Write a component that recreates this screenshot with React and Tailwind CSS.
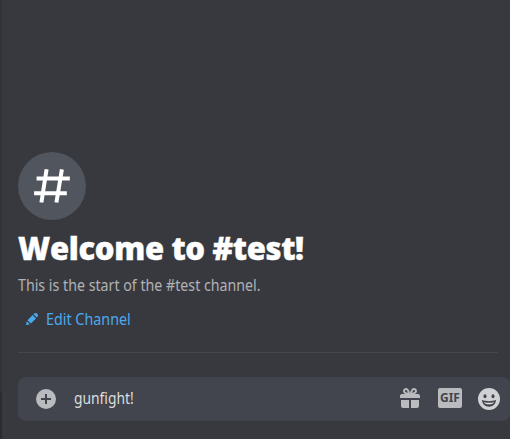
function HashIcon() {
  return (
    <svg width="68" height="68" viewBox="0 0 68 68" fill="none" stroke="#fff" strokeWidth="4">
      <path d="M28.6 17.3 23.4 50.5M43.9 17.3 38.4 50.5M18.6 26.6H51.8M16.1 41.3H48.8" />
    </svg>
  );
}

function PencilIcon() {
  return (
    <svg width="16" height="16" viewBox="0 0 24 24" fill="currentColor">
      <path fillRule="evenodd" clipRule="evenodd" d="M19.2929 9.8299L19.9409 9.18278C21.353 7.77064 21.353 5.47197 19.9409 4.05892C18.5287 2.64678 16.2292 2.64678 14.817 4.05892L14.1699 4.70694L19.2929 9.8299ZM12.8962 5.97688L5.18469 13.6906L10.3085 18.813L18.0201 11.0992L12.8962 5.97688ZM4.11851 20.9704L8.75906 19.8112L4.18692 15.239L3.02678 19.8796C2.95028 20.1856 3.04028 20.5105 3.26349 20.7337C3.48669 20.9569 3.8116 21.046 4.11851 20.9704Z" />
    </svg>
  );
}

function PlusIcon() {
  return (
    <svg width="20" height="20" viewBox="0 0 20 20">
      <circle cx="10" cy="10" r="10" fill="#b9bbbe" />
      <path d="M10 5v10M5 10h10" stroke="#42454d" strokeWidth="2" />
    </svg>
  );
}

function GiftIcon() {
  return (
    <svg className="-mt-0.5" width="24" height="24" viewBox="0 0 24 24" fill="#b9bbbe">
      <path fillRule="evenodd" clipRule="evenodd" d="M16.886 7.999H20C21.104 7.999 22 8.896 22 9.999V11.999H2V9.999C2 8.896 2.897 7.999 4 7.999H7.114C6.663 7.764 6.236 7.477 5.879 7.121C4.709 5.951 4.709 4.048 5.879 2.879C7.012 1.746 8.986 1.746 10.121 2.877C11.758 4.514 11.979 7.595 11.998 7.941L11.9875 7.999H12.0125L12.0002 7.94C12.022 7.595 12.242 4.515 13.879 2.878C15.014 1.745 16.986 1.746 18.121 2.877C19.29 4.049 19.29 5.952 18.121 7.121C17.764 7.477 17.337 7.764 16.886 7.999ZM7.293 5.707C6.903 5.316 6.903 4.682 7.293 4.292C7.481 4.103 7.732 4 8 4C8.268 4 8.519 4.103 8.707 4.292C9.297 4.882 9.641 5.94 9.825 6.822C8.945 6.639 7.879 6.293 7.293 5.707ZM14.174 6.824C14.359 5.941 14.702 4.883 15.293 4.293C15.481 4.103 15.732 4 16 4C16.268 4 16.519 4.103 16.706 4.291C17.096 4.682 17.097 5.316 16.707 5.707C16.116 6.298 15.057 6.642 14.174 6.824ZM3 13.999V19.999C3 21.102 3.897 21.999 5 21.999H11V13.999H3ZM13 13.999V21.999H19C20.104 21.999 21 21.102 21 19.999V13.999H13Z" />
    </svg>
  );
}

function SmileIcon() {
  return (
    <svg width="22" height="22" viewBox="0 0 22 22">
      <circle cx="11" cy="11" r="11" fill="#d0d1d2" />
      <ellipse cx="7" cy="8.2" rx="1.5" ry="2" fill="#42454d" />
      <ellipse cx="15" cy="8.2" rx="1.5" ry="2" fill="#42454d" />
      <path d="M4 12.1c2.2.8 4.5 1.1 7 1.1s4.8-.3 7-1.1c0 3.7-3 6.7-7 6.7s-7-3-7-6.7Z" fill="#42454d" />
      <path d="M5.8 13.9c1.7.6 3.3.8 5.2.8s3.5-.2 5.2-.8c-.7 1.5-2.7 2.3-5.2 2.3s-4.5-.8-5.2-2.3Z" fill="#e3e4e5" />
    </svg>
  );
}

export default function App() {
  return (
    <div className="flex h-[439px] w-[510px] overflow-hidden bg-[#38393e] font-['Noto_Sans',sans-serif]">
      <div className="flex w-0.5 shrink-0 flex-col bg-[#323338]">
        <div className="mt-auto h-[47px] bg-[#2b2c31]" />
      </div>
      <main className="flex w-[508px] shrink-0 flex-col pl-4 pt-[152px]">
        <div className="size-[68px] rounded-full bg-[#50555e]">
          <HashIcon />
        </div>
        <h1 className="mt-2 h-10 whitespace-nowrap font-['Open_Sans','Noto_Sans',sans-serif] text-[31px] font-extrabold leading-10 tracking-[-0.33px] text-white [-webkit-text-stroke:0.4px_white]">
          Welcome to #test!
        </h1>
        <p className="mt-[7px] h-5 origin-left scale-x-[0.888] whitespace-nowrap text-base leading-5 text-[#b0b2b6]">
          This is the start of the #test channel.
        </p>
        <button className="mt-3.5 flex h-5 items-center gap-1.5 self-start whitespace-nowrap pl-1.5 text-base leading-5 text-[#4ca8ee]">
          <PencilIcon />
          <span className="origin-left scale-x-[0.895]">Edit Channel</span>
        </button>
        <div className="mr-3 mt-[23px] h-px shrink-0 bg-[#45474d]" />
        <div className="mt-6 flex h-11 shrink-0 items-center rounded-lg bg-[#42454d] pl-[18px]">
          <PlusIcon />
          <span className="-mt-0.5 ml-[18px] w-[324px] origin-left scale-x-[0.865] text-base leading-5 text-[#dcddde]">gunfight!</span>
          <GiftIcon />
          <div className="-mt-0.5 ml-4 flex h-5 w-6 shrink-0 items-center justify-center rounded-[2px] bg-[#b9bbbe] text-[12px] font-bold leading-5 text-[#42454d]">
            GIF
          </div>
          <div className="ml-4 shrink-0">
            <SmileIcon />
          </div>
        </div>
      </main>
    </div>
  );
}
